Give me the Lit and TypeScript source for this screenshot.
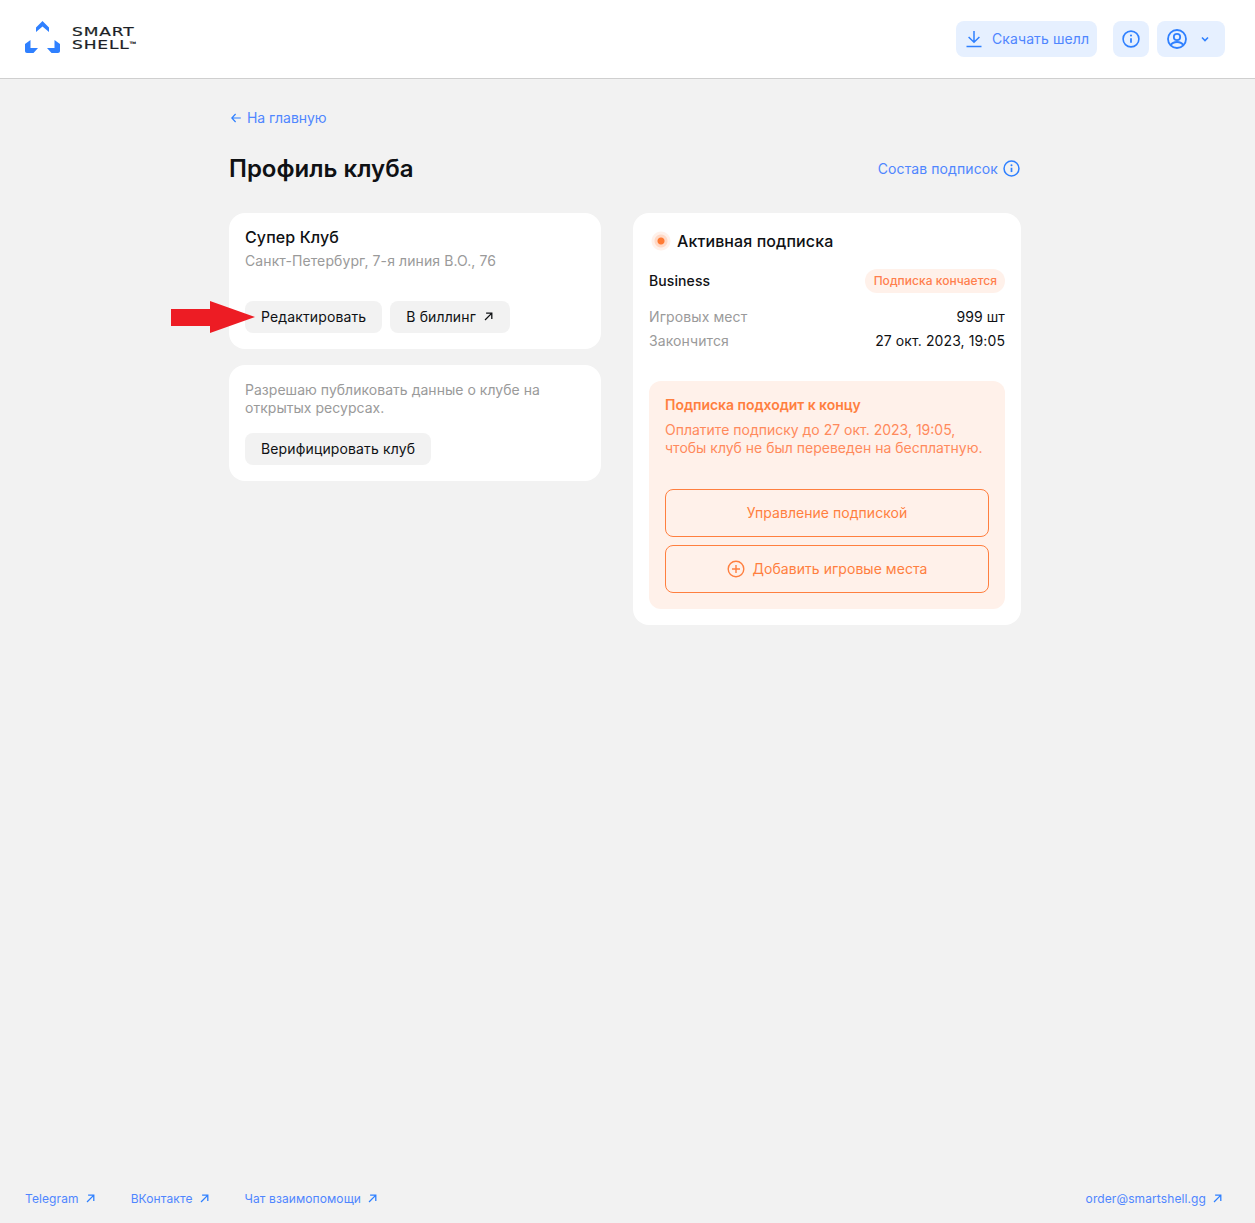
import { LitElement, html, css } from "lit";
import { customElement } from "lit/decorators.js";

const ext = (size: number) => html`<svg class="ext" width=${size} height=${size} viewBox="0 0 12 12" fill="none" stroke="currentColor" stroke-width="1.4"><path d="M2.2 9.8 9.4 2.6M3.4 2.4h6.2v6.2"/></svg>`;
const info = (size: number) => html`<svg width=${size} height=${size} viewBox="0 0 18 18" fill="none" stroke="currentColor" stroke-width="1.6"><circle cx="9" cy="9" r="7.9"/><path d="M9 8.2v4.6" stroke-width="1.8"/><circle cx="9" cy="5.5" r="1.05" fill="currentColor" stroke="none"/></svg>`;

@customElement("app-root")
export class AppRoot extends LitElement {
  static styles = css`
    :host { display: block; font-family: Inter, "Noto Sans", sans-serif; color: #0f1114; letter-spacing: 0.1px; }
    * { box-sizing: border-box; }
    .page { min-height: 100vh; display: flex; flex-direction: column; background: #f2f2f2; position: relative; }
    header { height: 79px; flex: none; background: #fff; border-bottom: 1px solid #cfcfcf; display: flex; align-items: center; padding: 0 30px 1px 25px; }
    .logo { display: flex; align-items: center; gap: 12px; }
    .logo svg { margin-top: -4px; }
    .wordmark { display: flex; flex-direction: column; font-family: "DejaVu Sans", sans-serif; font-size: 12px; line-height: 13px; letter-spacing: 0.6px; color: #1c1f26; width: 63px; transform: scaleX(1.42); transform-origin: left center; -webkit-text-stroke: 0.2px #1c1f26; }
    .wordmark sup { font-size: 3px; line-height: 0; letter-spacing: 0; vertical-align: 5px; }
    .spacer { flex: 1; }
    .hbtn { height: 36px; background: #e6f0ff; color: #2f80ff; border-radius: 8px; display: flex; align-items: center; font-size: 14px; }
    .dl { width: 141px; padding-left: 9px; gap: 9px; margin-right: 16px; }
    .dl span { color: #4f86ff; }
    .inf { width: 36px; justify-content: center; margin-right: 8px; }
    .prof { width: 68px; padding-left: 10px; gap: 13px; }
    main { padding: 0 0 0 229px; flex: 1; }
    .back { display: flex; align-items: center; gap: 6px; height: 20px; margin-top: 29px; padding: 0 0 1px 2px; font-size: 14px; color: #4f86ff; letter-spacing: -0.05px; }
    .title-row { display: flex; justify-content: space-between; align-items: center; width: 792px; height: 32px; margin-top: 25px; }
    h1 { margin: 0; font-size: 24px; line-height: 32px; font-weight: 600; letter-spacing: 0; }
    .plans { display: flex; align-items: center; gap: 5px; font-size: 14px; color: #4f86ff; padding: 0 1px 1px 0; }
    .plans svg { color: #2f80ff; }
    .cols { display: flex; gap: 32px; margin-top: 28px; align-items: flex-start; }
    .left { width: 372px; display: flex; flex-direction: column; gap: 16px; }
    .card { background: #fff; border-radius: 16px; padding: 16px; }
    .name { font-size: 16px; line-height: 16px; font-weight: 500; }
    .muted { color: #9a9a9a; }
    .addr { font-size: 14px; line-height: 16px; margin-top: 8px; }
    .btns { display: flex; gap: 8px; margin-top: 32px; }
    .btns.flush { margin-top: 0; }
    .btn { height: 32px; background: #f2f2f2; border-radius: 8px; padding: 0 16px 1px; display: flex; align-items: center; font-size: 14px; gap: 7px; white-space: nowrap; letter-spacing: 0.13px; }
    .pub { font-size: 14px; line-height: 18px; margin: 0 0 16px; letter-spacing: 0.03px; }
    .right { width: 388px; }
    .act { display: flex; align-items: center; gap: 8px; height: 24px; font-size: 16px; font-weight: 500; }
    .dot { width: 20px; height: 20px; margin-left: 2px; margin-right: -2px; border-radius: 50%; background: radial-gradient(circle, #ff7a33 0 3px, #ffd9c6 4px 6px, #fff1ea 7px 9px, transparent 10px); flex: none; }
    .row { display: flex; justify-content: space-between; align-items: center; font-size: 14px; padding-bottom: 1px; }
    .biz { margin-top: 16px; height: 24px; font-weight: 500; }
    .badge { height: 24px; border-radius: 12px; background: #fff1ea; color: #ff7f4d; font-size: 12px; padding: 0 8px 0 9px; display: flex; align-items: center; letter-spacing: 0.03px; }
    .r1 { margin-top: 12px; height: 24px; }
    .r2 { height: 24px; }
    .alert { margin-top: 28px; background: #fff1ea; border-radius: 12px; padding: 16px; color: #ff7f3f; }
    .at { font-size: 14px; line-height: 16px; font-weight: 600; letter-spacing: -0.04px; }
    .ad { font-size: 14px; line-height: 18px; margin-top: 8px; color: #ff8a5c; letter-spacing: 0; }
    .obtn { height: 48px; border: 1px solid #ff7f3f; border-radius: 8px; display: flex; align-items: center; justify-content: center; gap: 8px; padding-bottom: 1px; font-size: 14px; margin-top: 8px; color: #ff7f3f; letter-spacing: 0.04px; }
    .obtn.first { margin-top: 32px; }
    footer { flex: none; height: 48px; display: flex; align-items: center; padding: 0 32px 2px 25px; font-size: 12px; color: #4f86ff; }
    footer .l { display: flex; align-items: center; gap: 6px; margin-right: 35px; }
    footer .l svg { color: #2f80ff; }
    footer .l.last { margin-right: 0; }
    .arrow { position: absolute; left: 171px; top: 301px; }
  `;

  render() {
    return html`<div class="page">
      <header>
        <div class="logo">
          <svg width="35" height="32" viewBox="0 0 35 32" fill="#2f80ff">
            <path d="M17.5 0 24 6.5V11L17.5 5.5 11 11V6.5Z"/>
            <path d="M0 23 5.5 19V27H13L8.5 32H2C.8 32 0 31.2 0 30Z"/>
            <path d="M35 23 29.5 19V27H22L26.5 32H33C34.2 32 35 31.2 35 30Z"/>
          </svg>
          <div class="wordmark"><span>SMART</span><span>SHELL<sup>TM</sup></span></div>
        </div>
        <div class="spacer"></div>
        <div class="hbtn dl">
          <svg width="18" height="18" viewBox="0 0 18 18" fill="none" stroke="currentColor" stroke-width="1.5"><path d="M9 1v11M3.6 7 9 12.2 14.4 7M1.5 16.6h15"/></svg>
          <span>Скачать шелл</span>
        </div>
        <div class="hbtn inf">${info(18)}</div>
        <div class="hbtn prof">
          <svg width="20" height="20" viewBox="0 0 20 20" fill="none" stroke="currentColor" stroke-width="1.8"><circle cx="10" cy="10" r="9"/><circle cx="10" cy="8" r="3.2"/><path d="M3.8 16.2C5 13.8 7 13 10 13s5 .8 6.2 3.2"/></svg>
          <svg width="10" height="10" viewBox="0 0 10 10" fill="none" stroke="currentColor" stroke-width="1.6"><path d="M2 3.5 5 6.5 8 3.5"/></svg>
        </div>
      </header>
      <main>
        <div class="back">
          <svg width="10" height="10" viewBox="0 0 10 10" fill="none" stroke="#2f80ff" stroke-width="1.2"><path d="M9.8 5H.8M4.6 1 .8 5l3.8 4"/></svg>
          <span>На главную</span>
        </div>
        <div class="title-row">
          <h1>Профиль клуба</h1>
          <div class="plans"><span>Состав подписок</span>${info(17)}</div>
        </div>
        <div class="cols">
          <div class="left">
            <div class="card">
              <div class="name">Супер Клуб</div>
              <div class="addr muted">Санкт-Петербург, 7-я линия В.О., 76</div>
              <div class="btns">
                <div class="btn">Редактировать</div>
                <div class="btn">В биллинг ${ext(11)}</div>
              </div>
            </div>
            <div class="card">
              <p class="pub muted">Разрешаю публиковать данные о клубе на<br />открытых ресурсах.</p>
              <div class="btns flush"><div class="btn">Верифицировать клуб</div></div>
            </div>
          </div>
          <div class="right card">
            <div class="act"><span class="dot"></span><span>Активная подписка</span></div>
            <div class="row biz"><span>Business</span><span class="badge">Подписка кончается</span></div>
            <div class="row r1"><span class="muted">Игровых мест</span><span>999 шт</span></div>
            <div class="row r2"><span class="muted">Закончится</span><span>27 окт. 2023, 19:05</span></div>
            <div class="alert">
              <div class="at">Подписка подходит к концу</div>
              <div class="ad">Оплатите подписку до 27 окт. 2023, 19:05,<br />чтобы клуб не был переведен на бесплатную.</div>
              <div class="obtn first">Управление подпиской</div>
              <div class="obtn">
                <svg width="18" height="18" viewBox="0 0 18 18" fill="none" stroke="currentColor" stroke-width="1.4"><circle cx="9" cy="9" r="7.8"/><path d="M9 5v8M5 9h8"/></svg>
                <span>Добавить игровые места</span>
              </div>
            </div>
          </div>
        </div>
      </main>
      <footer>
        <span class="l">Telegram ${ext(11)}</span>
        <span class="l">ВКонтакте ${ext(11)}</span>
        <span class="l last">Чат взаимопомощи ${ext(11)}</span>
        <span class="spacer"></span>
        <span class="l last">order@smartshell.gg ${ext(11)}</span>
      </footer>
      <svg class="arrow" width="84" height="32" viewBox="0 0 84 32" fill="#ed1c24"><path d="M0 8H39V0L84 16 39 32V25H0Z"/></svg>
    </div>`;
  }
}
